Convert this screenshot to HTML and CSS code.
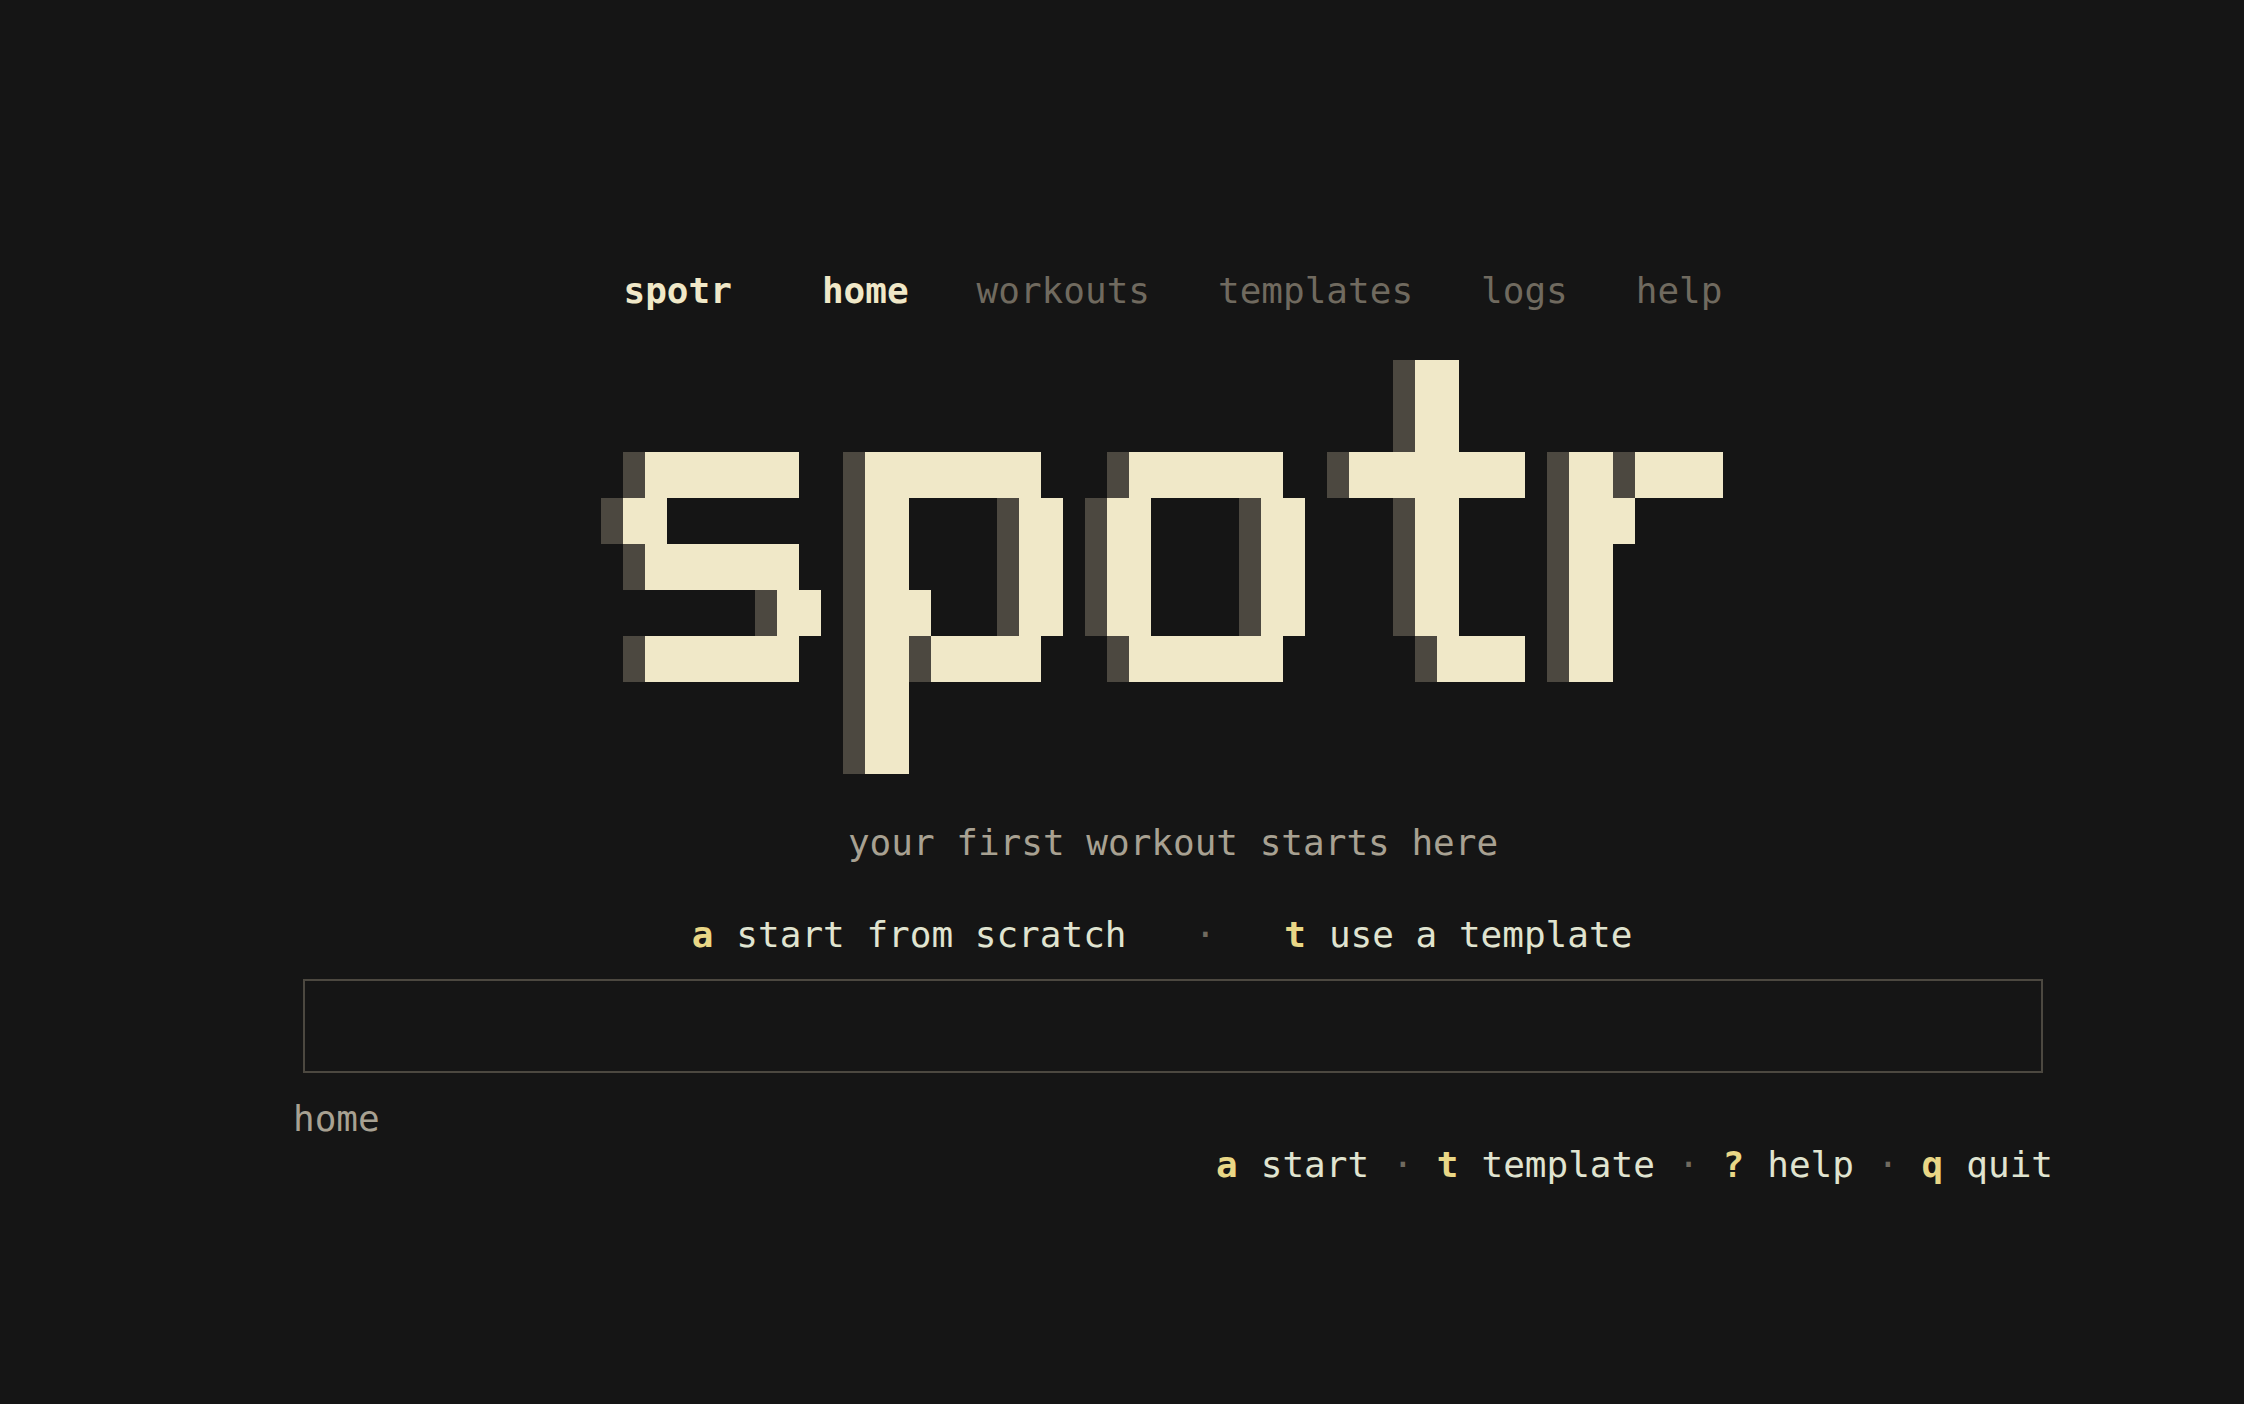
FILE: index.html
```html
<!DOCTYPE html>
<html lang="en">
<head>
    <meta charset="utf-8">
    <title>spotr</title>
    <link rel="stylesheet" href="styles.css">
</head>
<body>
    <div class="screen">
        <nav class="nav">
            <a class="brand" href="#">spotr</a>
            <a class="active" href="#home">home</a>
            <a href="#workouts">workouts</a>
            <a href="#templates">templates</a>
            <a href="#logs">logs</a>
            <a href="#help">help</a>
        </nav>

        <!-- one unit = one terminal cell -->
        <svg class="logo" viewBox="0 0 51 9" preserveAspectRatio="none" shape-rendering="crispEdges" role="img" aria-label="spotr">
            <g class="logo-shadow">
                <rect x="1" y="2" width="1" height="1"/>
                <rect x="0" y="3" width="1" height="1"/>
                <rect x="1" y="4" width="1" height="1"/>
                <rect x="7" y="5" width="1" height="1"/>
                <rect x="1" y="6" width="1" height="1"/>
                <rect x="11" y="2" width="1" height="7"/>
                <rect x="18" y="3" width="1" height="3"/>
                <rect x="14" y="6" width="1" height="1"/>
                <rect x="23" y="2" width="1" height="1"/>
                <rect x="22" y="3" width="1" height="3"/>
                <rect x="29" y="3" width="1" height="3"/>
                <rect x="23" y="6" width="1" height="1"/>
                <rect x="36" y="0" width="1" height="2"/>
                <rect x="33" y="2" width="1" height="1"/>
                <rect x="36" y="3" width="1" height="3"/>
                <rect x="37" y="6" width="1" height="1"/>
                <rect x="43" y="2" width="1" height="5"/>
                <rect x="46" y="2" width="1" height="1"/>
            </g>
            <g class="logo-face">
                <rect x="2" y="2" width="7" height="1"/>
                <rect x="1" y="3" width="2" height="1"/>
                <rect x="2" y="4" width="7" height="1"/>
                <rect x="8" y="5" width="2" height="1"/>
                <rect x="2" y="6" width="7" height="1"/>
                <rect x="12" y="2" width="8" height="1"/>
                <rect x="12" y="3" width="2" height="6"/>
                <rect x="14" y="5" width="1" height="1"/>
                <rect x="19" y="3" width="2" height="3"/>
                <rect x="15" y="6" width="5" height="1"/>
                <rect x="24" y="2" width="7" height="1"/>
                <rect x="23" y="3" width="2" height="3"/>
                <rect x="30" y="3" width="2" height="3"/>
                <rect x="24" y="6" width="7" height="1"/>
                <rect x="37" y="0" width="2" height="2"/>
                <rect x="34" y="2" width="8" height="1"/>
                <rect x="37" y="3" width="2" height="3"/>
                <rect x="38" y="6" width="4" height="1"/>
                <rect x="44" y="2" width="2" height="5"/>
                <rect x="46" y="3" width="1" height="1"/>
                <rect x="47" y="2" width="4" height="1"/>
            </g>
        </svg>

        <p class="tagline">your first workout starts here</p>

        <div class="actions">
            <button><b>a</b>start from scratch</button>
            <span class="dot">·</span>
            <button><b>t</b>use a template</button>
        </div>

        <input class="prompt" type="text" aria-label="command">

        <p class="location">home</p>

        <footer class="keys">
            <button><b>a</b>start</button>
            <span class="dot">·</span>
            <button><b>t</b>template</button>
            <span class="dot">·</span>
            <button><b>?</b>help</button>
            <span class="dot">·</span>
            <button><b>q</b>quit</button>
        </footer>
    </div>
</body>
</html>
```
FILE: styles.css
```css
:root {
    --col: 22px;
    --row: 46px;
    --bg: #151515;
    --cream: #f0e8c8;
    --shadow: #4c4840;
    --dim: #706a5f;
    --muted: #a8a192;
    --text: #e0e4d0;
    --key: #e9d786;
}
* {
    box-sizing: border-box;
}
body {
    margin: 0;
    background-color: var(--bg);
    color: var(--text);
    font-family: "DejaVu Sans Mono", monospace;
    font-size: 36px;
    line-height: var(--row);
}
.screen {
    display: flex;
    flex-direction: column;
    padding: 268px 191px 216px 293px;
}
p {
    margin: 0;
}
a {
    color: var(--dim);
    text-decoration: none;
}
button {
    display: flex;
    gap: 23px;
    padding: 0;
    border: none;
    background: none;
    color: inherit;
    font: inherit;
    cursor: pointer;
}
b {
    color: var(--key);
}
.nav {
    display: flex;
    justify-content: center;
    gap: 68px;
    margin-bottom: var(--row);
}
.nav .brand {
    margin-right: var(--col);
}
.nav .brand, .nav .active {
    color: var(--cream);
    font-weight: bold;
}
.logo {
    display: block;
    align-self: center;
    width: calc(var(--col) * 51);
    height: calc(var(--row) * 9);
    margin-right: var(--col);
}
.logo-shadow {
    fill: var(--shadow);
}
.logo-face {
    fill: var(--cream);
}
.tagline {
    margin: var(--row) 0;
    text-align: center;
    color: var(--muted);
}
.actions {
    display: flex;
    justify-content: center;
    gap: 68px;
    margin-right: var(--col);
}
.dot {
    color: var(--dim);
}
.prompt {
    height: 94px;
    margin: 21px 10px 23px;
    padding: 0 var(--col);
    border: 2px solid var(--shadow);
    background: none;
    color: inherit;
    font: inherit;
    outline: none;
}
.location {
    color: var(--muted);
}
.keys {
    display: flex;
    justify-content: flex-end;
    gap: 23px;
}
```
